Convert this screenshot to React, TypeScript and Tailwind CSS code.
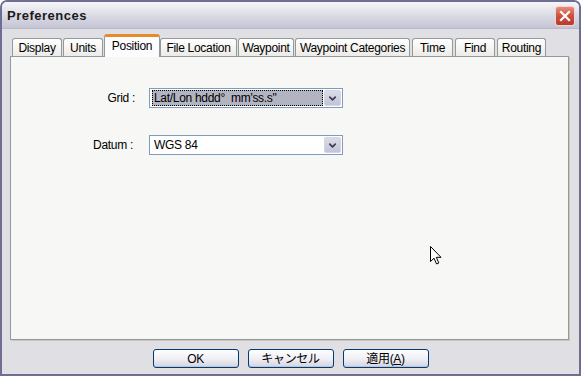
import { ChevronDown } from "lucide-react";

const tabs = [
  { label: "Display", w: "w-[50px]", ml: "ml-0" },
  { label: "Units", w: "w-[40px]", ml: "ml-[1px]" },
  { label: "Position", w: "w-[56px]", ml: "ml-[1px]", active: true },
  { label: "File Location", w: "w-[77px]", ml: "ml-0" },
  { label: "Waypoint", w: "w-[56px]", ml: "ml-[1px]" },
  { label: "Waypoint Categories", w: "w-[115px]", ml: "ml-[1px]" },
  { label: "Time", w: "w-[41px]", ml: "ml-[2px]" },
  { label: "Find", w: "w-[40px]", ml: "ml-[2px]" },
  { label: "Routing", w: "w-[49px]", ml: "ml-[2px]" },
];

function Tab({ label, w, ml, active }: { label: string; w: string; ml: string; active?: boolean }) {
  if (active) {
    return (
      <div
        className={`${w} ${ml} relative z-10 -mb-[1px] h-[23px] rounded-t-[3px] border-x border-t-[3px] border-x-[#919b9c] border-t-[#e68b2c] bg-[#fcfcfe] flex items-center justify-center pb-[2px]`}
      >
        {label}
      </div>
    );
  }
  return (
    <div
      className={`${w} ${ml} h-[18px] rounded-t-[3px] border border-b-0 border-[#919b9c] bg-gradient-to-b from-[#ffffff] to-[#ecebe6] flex items-center justify-center`}
    >
      {label}
    </div>
  );
}

function Select({ value, focused }: { value: string; focused?: boolean }) {
  return (
    <div className="ml-[14px] w-[194px] h-[20px] border border-[#7f9db9] bg-white flex items-center p-[1px]">
      <div className="flex-1 h-full flex items-center px-[1px]">
        {focused ? (
          <div className="w-full h-[16px] bg-[#b3b4c1] border border-dotted border-black flex items-center pl-[1px] whitespace-pre">
            {value}
          </div>
        ) : (
          <div className="pl-[2px] whitespace-pre">{value}</div>
        )}
      </div>
      <div className="w-[17px] h-[16px] rounded-[2px] border border-[#d2d5e8] bg-gradient-to-b from-[#dcdce8] to-[#c2c3d6] flex items-center justify-center">
        <ChevronDown className="w-[11px] h-[11px] text-[#3a3a55]" strokeWidth={3.5} />
      </div>
    </div>
  );
}

function Button({ children }: { children: React.ReactNode }) {
  return (
    <div className="w-[86px] h-[19px] rounded-[3px] border border-[#003c74] bg-gradient-to-b from-[#ffffff] via-[#f0f0f5] to-[#d4d4e2] shadow-[inset_0_-1px_0_#c3c3d4] flex items-center justify-center">
      {children}
    </div>
  );
}

export default function App() {
  return (
    <div className="relative w-[581px] h-[377px] bg-white font-['Liberation_Sans','Noto_Sans_CJK_JP',sans-serif] text-[12px] tracking-[-0.3px] text-black">
      <div className="w-[581px] h-[376px] rounded-t-[7px] border-2 border-[#6e6e92] bg-[#e0dfe3] flex flex-col overflow-hidden">
        {/* Title bar */}
        <div className="h-[27px] shrink-0 bg-gradient-to-b from-[#f6f6f9] via-[#dcdce6] to-[#c4c4d4] border-b border-[#b8b8c8] flex items-center justify-between pl-[5px] pr-[4px] pt-[2px]">
          <span className="text-[13px] font-bold tracking-[0.5px] text-[#1a1a1a]">Preferences</span>
          <div className="w-[20px] h-[20px] rounded-[3px] border border-[#f2d6d0] bg-gradient-to-b from-[#e58d78] via-[#cc4f3f] to-[#b73a2e] flex items-center justify-center">
            <svg width="12" height="12" viewBox="0 0 12 12">
              <path d="M2 2 L10 10 M10 2 L2 10" stroke="white" strokeWidth="2.2" strokeLinecap="square" />
            </svg>
          </div>
        </div>

        {/* Body */}
        <div className="flex-1 flex flex-col pl-[8px] pr-[10px] pt-[5px]">
          <div className="flex items-end h-[22px] pl-[2px]">
            {tabs.map((t) => (
              <Tab key={t.label} {...t} />
            ))}
          </div>

          <div className="h-[284px] border border-[#919b9c] bg-[#f7f7f5] shadow-[1px_1px_0_#c9c7ba] flex flex-col">
            <div className="flex items-center mt-[31px]">
              <div className="w-[124px] text-right">Grid :</div>
              <Select value={"Lat/Lon hddd°  mm'ss.s\""} focused />
            </div>
            <div className="flex items-center mt-[27px]">
              <div className="w-[122px] text-right">Datum :</div>
              <div className="w-[2px]" />
              <Select value="WGS 84" />
            </div>
          </div>

          <div className="flex justify-center gap-[9px] mt-[9px] pl-[2px]">
            <Button>OK</Button>
            <Button>キャンセル</Button>
            <Button>
              <span>
                適用(<span className="underline">A</span>)
              </span>
            </Button>
          </div>
        </div>
      </div>

      {/* Mouse cursor */}
      <svg className="absolute left-[430px] top-[246px]" width="13" height="20" viewBox="0 0 13 20">
        <path
          d="M0.5 0.5 L0.5 15.5 L4 12.2 L6.6 18 L8.8 17 L6.3 11.3 L11 11.3 Z"
          fill="white"
          stroke="black"
          strokeWidth="1"
          strokeLinejoin="miter"
        />
      </svg>
    </div>
  );
}
